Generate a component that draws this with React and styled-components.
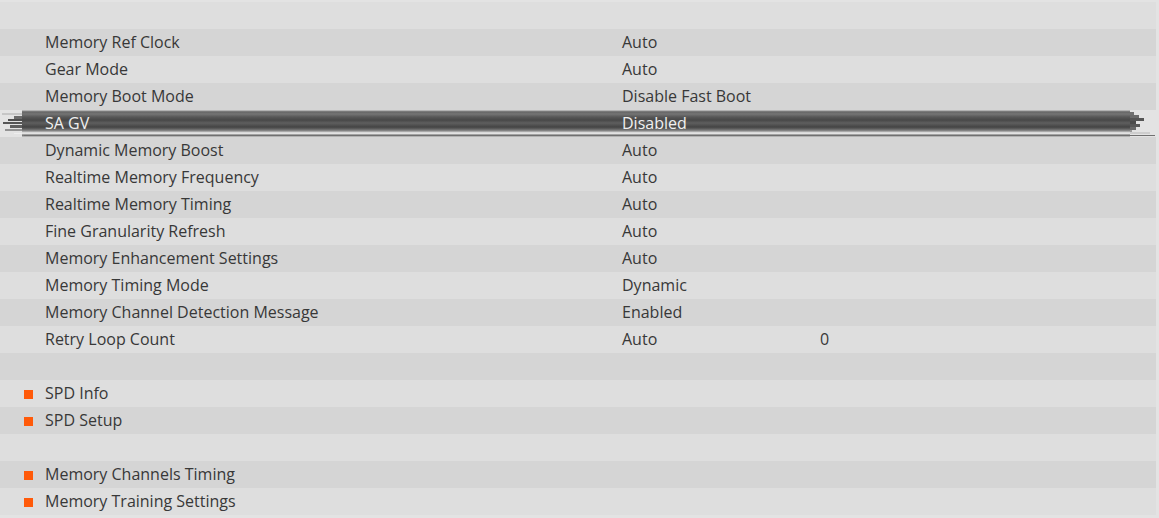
import styled, {createGlobalStyle} from "styled-components";

const GlobalStyle = createGlobalStyle`
    html, body {
        margin: 0;
        padding: 0;
        background: #e3e3e3;
    }
`;

const Page = styled.div`
    width: 1159px;
    height: 518px;
    padding-top: 2px;
    box-sizing: border-box;
    background: #e3e3e3;
    font-family: "Open Sans", "DejaVu Sans", sans-serif;
    font-size: 16px;
    color: #383838;
    overflow: hidden;
`;

const List = styled.div`
    width: 1156px;
    display: flex;
    flex-direction: column;
`;

const Row = styled.div`
    position: relative;
    height: 27px;
    padding-bottom: 2px;
    box-sizing: border-box;
    display: grid;
    grid-template-columns: 45px 577px 198px 1fr;
    align-items: center;
    background: ${({dark}) => (dark ? "#d5d5d5" : "#dedede")};
    color: ${({selected}) => (selected ? "#f0f0f0" : "#383838")};
    white-space: nowrap;

    ${({selected}) => selected && `
        background: linear-gradient(
            to bottom,
            #d8d8d8 0px,
            #8c8c8c 1px,
            #666 2px,
            #747474 4px,
            #575757 7px,
            #474747 10px,
            #5e5e5e 13px,
            #444 17px,
            #616161 19px,
            #8d8d8d 21px,
            #c4c4c4 22px,
            #eeeeee 23px,
            #d6d6d6 24px,
            #6e6e6e 25px,
            #8a8a8a 26px,
            #dadada 27px
        );
        background-size: 1108px 100%;
        background-position: 22px 0;
        background-repeat: no-repeat;
    `}
`;

const Label = styled.span`
    grid-column: 2;
    position: relative;
    z-index: 1;
`;

const Value = styled.span`
    grid-column: 3;
    position: relative;
    z-index: 1;
`;

const Extra = styled.span`
    grid-column: 4;
`;

const Bullet = styled.span`
    grid-column: 1;
    justify-self: start;
    margin-left: 24px;
    width: 9px;
    height: 9px;
    margin-top: 3px;
    background: #ff5a0a;
`;

const EdgeArt = styled.svg`
    position: absolute;
    top: 0;
    left: 0;
    width: 100%;
    height: 27px;
    pointer-events: none;
`;

const SelectionEdges = () => (
    <EdgeArt viewBox="0 0 1156 27" preserveAspectRatio="none">
        {/* left streaks */}
        <rect x="2" y="3" width="20" height="2" fill="#c6c6c6"/>
        <rect x="14" y="6" width="8" height="3" fill="#6a6a6a"/>
        <rect x="8" y="9" width="14" height="2" fill="#4e4e4e"/>
        <rect x="3" y="12" width="19" height="2" fill="#555"/>
        <rect x="10" y="15" width="12" height="3" fill="#606060"/>
        <rect x="5" y="19" width="17" height="2" fill="#939393"/>
        <rect x="14" y="23" width="8" height="1" fill="#eee"/>
        <rect x="24" y="25" width="1131" height="1" fill="#707070"/>
        {/* right streaks */}
        <rect x="1130" y="2" width="4" height="3" fill="#707070"/>
        <rect x="1130" y="5" width="9" height="3" fill="#6a6a6a"/>
        <rect x="1130" y="8" width="14" height="3" fill="#555"/>
        <rect x="1130" y="11" width="6" height="3" fill="#4c4c4c"/>
        <rect x="1130" y="14" width="10" height="3" fill="#585858"/>
        <rect x="1130" y="17" width="6" height="3" fill="#6a6a6a"/>
        <rect x="1130" y="20" width="2" height="2" fill="#9a9a9a"/>
        <rect x="1130" y="22" width="20" height="2" fill="#cdcdcd"/>
    </EdgeArt>
);

const rows = [
    {},
    {label: "Memory Ref Clock", value: "Auto"},
    {label: "Gear Mode", value: "Auto"},
    {label: "Memory Boot Mode", value: "Disable Fast Boot"},
    {label: "SA GV", value: "Disabled", selected: true},
    {label: "Dynamic Memory Boost", value: "Auto"},
    {label: "Realtime Memory Frequency", value: "Auto"},
    {label: "Realtime Memory Timing", value: "Auto"},
    {label: "Fine Granularity Refresh", value: "Auto"},
    {label: "Memory Enhancement Settings", value: "Auto"},
    {label: "Memory Timing Mode", value: "Dynamic"},
    {label: "Memory Channel Detection Message", value: "Enabled"},
    {label: "Retry Loop Count", value: "Auto", extra: "0"},
    {},
    {label: "SPD Info", menu: true},
    {label: "SPD Setup", menu: true},
    {},
    {label: "Memory Channels Timing", menu: true},
    {label: "Memory Training Settings", menu: true},
];

const App = () => (
    <Page>
        <GlobalStyle/>
        <List>
            {rows.map((item, index) => (
                <Row key={index} dark={index % 2 === 1} selected={item.selected}>
                    {item.selected && <SelectionEdges/>}
                    {item.menu && <Bullet/>}
                    {item.label && <Label>{item.label}</Label>}
                    {item.value && <Value>{item.value}</Value>}
                    {item.extra && <Extra>{item.extra}</Extra>}
                </Row>
            ))}
        </List>
    </Page>
);

export default App;
